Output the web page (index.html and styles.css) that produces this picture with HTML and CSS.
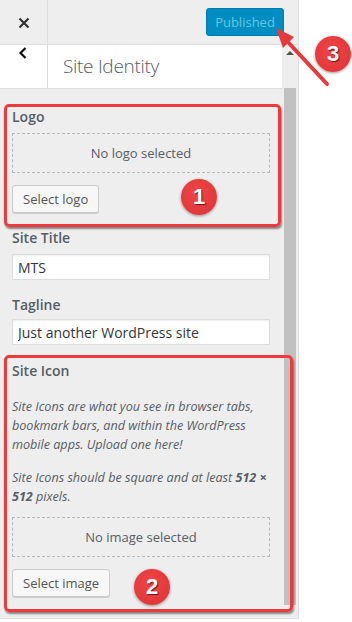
FILE: index.html
```html
<!DOCTYPE html>
<html lang="en">
<head>
    <meta charset="UTF-8">
    <title>Site Identity</title>
    <link rel="stylesheet" href="styles.css">
</head>
<body>
<div class="panel">
    <div class="topbar">
        <button class="close-btn" aria-label="Close">
            <svg width="12" height="12" viewBox="0 0 12 12"><path d="M1.5 1.5 L10.5 10.5 M10.5 1.5 L1.5 10.5" stroke="#333" stroke-width="2.2" fill="none"/></svg>
        </button>
        <button class="publish-btn">Published</button>
    </div>
    <div class="body-row">
        <div class="main">
            <div class="section-title">
                <button class="back-btn" aria-label="Back">
                    <svg width="10" height="12" viewBox="0 0 10 12"><path d="M7.5 1 L2.5 6 L7.5 11" stroke="#111" stroke-width="2.2" fill="none"/></svg>
                </button>
                <h3>Site Identity</h3>
            </div>
            <div class="controls">
                <div class="control">
                    <span class="control-title">Logo</span>
                    <div class="placeholder">No logo selected</div>
                    <button class="wp-btn">Select logo</button>
                </div>
                <div class="control">
                    <label class="control-title" for="blogname">Site Title</label>
                    <input class="text-input" id="blogname" type="text" value="MTS">
                </div>
                <div class="control control-tagline">
                    <label class="control-title" for="blogdesc">Tagline</label>
                    <input class="text-input" id="blogdesc" type="text" value="Just another WordPress site">
                </div>
                <div class="control control-icon">
                    <span class="control-title">Site Icon</span>
                    <p class="description">Site Icons are what you see in browser tabs, bookmark bars, and within the WordPress mobile apps. Upload one here!</p>
                    <p class="description second">Site Icons should be square and at least <strong>512&nbsp;×</strong> <strong>512</strong> pixels.</p>
                    <div class="placeholder">No image selected</div>
                    <button class="wp-btn">Select image</button>
                </div>
            </div>
        </div>
        <div class="scrollbar">
            <span class="scroll-up"></span>
            <span class="scroll-thumb"></span>
        </div>
    </div>
</div>

<!-- annotations -->
<div class="mark mark-logo"></div>
<div class="mark mark-icon"></div>
<span class="badge badge-1">1</span>
<span class="badge badge-2">2</span>
<span class="badge badge-3">3</span>
<svg class="arrow" width="352" height="622" viewBox="0 0 352 622">
    <line x1="327" y1="84" x2="286" y2="40" stroke="#e8383b" stroke-width="4" stroke-linecap="round"/>
    <polygon points="276,28 294,37 283,48" fill="#e8383b"/>
</svg>
</body>
</html>
```

FILE: styles.css
```css
body {
    margin: 0;
    background-color: #ffffff;
    font-family: 'Open Sans', 'Noto Sans', sans-serif;
    color: #555d66;
}
button {
    font-family: inherit;
}
.panel {
    width: 298px;
    height: 618px;
    background-color: #eeeeee;
    border-right: 1px solid #dddddd;
    border-bottom: 1px solid #dddddd;
    display: flex;
    flex-direction: column;
}
.topbar {
    height: 44px;
    border-bottom: 1px solid #dddddd;
    display: flex;
    align-items: center;
    justify-content: space-between;
    padding-right: 14px;
}
.close-btn {
    width: 48px;
    height: 44px;
    border: none;
    border-right: 1px solid #dddddd;
    background: transparent;
    padding: 0;
    display: flex;
    align-items: center;
    justify-content: center;
    padding-top: 2px;
}
.publish-btn {
    height: 28px;
    width: 78px;
    padding: 0;
    border: 1px solid #007cb2;
    border-radius: 3px;
    background-color: #008ec2;
    color: #66c6e4;
    font-size: 13px;
}
.body-row {
    flex: 1;
    display: flex;
    overflow: hidden;
}
.main {
    width: 282px;
}
.section-title {
    height: 43px;
    background-color: #ffffff;
    border-bottom: 1px solid #dddddd;
    display: flex;
}
.back-btn {
    width: 48px;
    border: none;
    border-right: 1px solid #dddddd;
    background: transparent;
    padding: 0;
    display: flex;
    justify-content: center;
    padding-top: 2px;
    padding-right: 2px;
}
.section-title h3 {
    margin: 0;
    padding-left: 15px;
    font-size: 19px;
    font-weight: 300;
    letter-spacing: -0.3px;
    line-height: 43px;
    color: #555d66;
}
.controls {
    padding: 18px 12px 0 12px;
}
.control {
    margin-bottom: 15px;
}
.control-tagline {
    margin-bottom: 16px;
}
.control-title {
    display: block;
    font-size: 14px;
    font-weight: 600;
    line-height: 20px;
    color: #555d66;
}
.placeholder {
    box-sizing: border-box;
    height: 40px;
    margin-top: 6px;
    border: 1px dashed #b4b9be;
    display: flex;
    align-items: center;
    justify-content: center;
    font-size: 13px;
    color: #555d66;
}
.wp-btn {
    display: block;
    margin-top: 12px;
    height: 28px;
    padding: 0 10px;
    border: 1px solid #cccccc;
    border-radius: 3px;
    background-color: #f7f7f7;
    box-shadow: 0 1px 0 #cccccc;
    color: #555555;
    font-size: 13px;
}
.text-input {
    box-sizing: border-box;
    display: block;
    width: 100%;
    height: 26px;
    margin-top: 6px;
    padding: 0 5px;
    border: 1px solid #dddddd;
    background-color: #ffffff;
    box-shadow: inset 0 1px 2px rgba(0, 0, 0, 0.07);
    font-family: inherit;
    font-size: 14px;
    color: #32373c;
}
.control-tagline .text-input {
    margin-top: 4px;
}
.description {
    margin: 16px 0 0 0;
    font-size: 12.6px;
    font-style: italic;
    line-height: 19px;
    color: #555d66;
}
.description.second {
    margin-top: 14px;
}
.control-icon .placeholder {
    margin-top: 11px;
}
.scrollbar {
    width: 16px;
    display: flex;
    flex-direction: column;
    align-items: flex-start;
}
.scroll-up {
    margin: 6px 0 0 4px;
    width: 0;
    height: 0;
    border-left: 4px solid transparent;
    border-right: 4px solid transparent;
    border-bottom: 4px solid #505050;
}
.scroll-thumb {
    margin: 33px 0 0 2px;
    width: 12px;
    height: 517px;
    background-color: #c1c1c1;
}

/* annotations */
.mark {
    position: absolute;
    box-sizing: border-box;
    border: 3px solid #ec3a3d;
    border-radius: 5px;
    box-shadow: 1px 2px 2px rgba(0, 0, 0, 0.45);
}
.mark-logo {
    left: 4px;
    top: 104px;
    width: 277px;
    height: 123px;
}
.mark-icon {
    left: 4px;
    top: 355px;
    width: 289px;
    height: 257px;
}
.badge {
    position: absolute;
    width: 36px;
    height: 36px;
    border-radius: 50%;
    background: radial-gradient(circle at 45% 40%, #f04446, #de3335);
    box-shadow: 0 1px 3px rgba(0, 0, 0, 0.4);
    color: #ffffff;
    font-family: 'Liberation Sans', Arial, sans-serif;
    font-weight: bold;
    font-size: 22px;
    line-height: 36px;
    text-align: center;
    text-shadow: 1px 1px 1px rgba(0, 0, 0, 0.6);
}
.badge-1 {
    left: 181px;
    top: 179px;
}
.badge-2 {
    left: 134px;
    top: 569px;
}
.badge-3 {
    left: 315px;
    top: 36px;
}
.arrow {
    position: absolute;
    left: 0;
    top: 0;
    pointer-events: none;
}
```
